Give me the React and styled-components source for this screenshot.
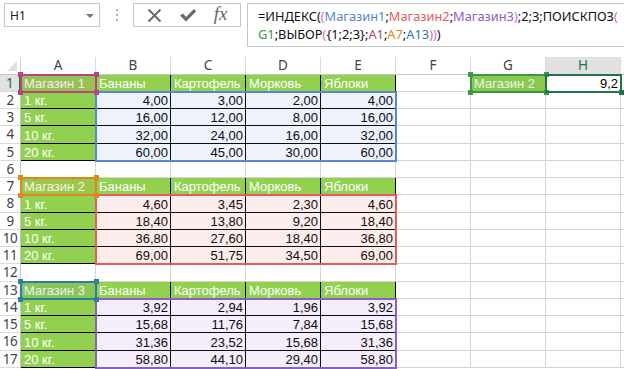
import React from "react";
import styled, { createGlobalStyle } from "styled-components";

const GlobalStyle = createGlobalStyle`
  html, body { margin: 0; padding: 0; background: #fff; }
  body { width: 624px; height: 369px; overflow: hidden; }
`;

const UI_FONT = `"Noto Sans", "Open Sans", "Liberation Sans", sans-serif`;
const CELL_FONT = `"Liberation Sans", Arial, sans-serif`;

const Page = styled.div`
  width: 624px;
  height: 369px;
  overflow: hidden;
  display: flex;
  flex-direction: column;
  background: #fff;
`;

const FormulaBar = styled.div`
  height: 57px;
  flex: none;
  display: flex;
  align-items: flex-start;
  padding: 3px 0 0 4px;
  box-sizing: border-box;
`;

const NameBox = styled.div`
  width: 96px;
  height: 24px;
  box-sizing: border-box;
  border: 1px solid #c6c6c6;
  display: flex;
  align-items: center;
  justify-content: space-between;
  padding: 0 5px 0 5px;
  font: 12px ${UI_FONT};
  color: #222;
`;

const Caret = styled.span`
  width: 0;
  height: 0;
  border-left: 4px solid transparent;
  border-right: 4px solid transparent;
  border-top: 4px solid #777;
  margin-top: 1px;
`;

const Grip = styled.div`
  width: 33px;
  height: 24px;
  display: flex;
  align-items: center;
  justify-content: center;
`;

const FxButtons = styled.div`
  width: 108px;
  height: 24px;
  box-sizing: border-box;
  border: 1px solid #c6c6c6;
  display: flex;
  align-items: center;
  justify-content: space-around;
  padding: 0 4px;
`;

const FxLabel = styled.span`
  font: italic 19px "Liberation Serif", "DejaVu Serif", serif;
  color: #666;
  line-height: 20px;
  margin-top: -2px;
`;

const FormulaInput = styled.div`
  flex: 1;
  margin-left: 6px;
  margin-right: -4px;
  height: 44px;
  box-sizing: border-box;
  border: 1px solid #c6c6c6;
  padding: 3px 0 0 10px;
  font: 12.8px ${UI_FONT};
  line-height: 18px;
  color: #111;
  white-space: pre;
  overflow: hidden;
`;

const Tok = styled.span`
  color: ${(p) => p.$c || "#111"};
`;

const Sheet = styled.div`
  display: grid;
  grid-template-columns: 21px repeat(8, 75px) 1fr;
  grid-template-rows: 17.5px repeat(17, 17.25px);
`;

const place = (p) => `grid-row: ${p.$r}; grid-column: ${p.$c};`;

const Corner = styled.div`
  grid-row: 1;
  grid-column: 1;
  box-sizing: border-box;
  border-right: 1px solid #d4d4d4;
  border-bottom: 1px solid #c6c6c6;
  position: relative;
  &::after {
    content: "";
    position: absolute;
    right: 3px;
    bottom: 3px;
    width: 0;
    height: 0;
    border-left: 10px solid transparent;
    border-bottom: 10px solid #dfdfdf;
  }
`;

const ColHead = styled.div`
  grid-row: 1;
  grid-column: ${(p) => p.$c};
  box-sizing: border-box;
  border-right: 1px solid #dadada;
  border-bottom: 1px solid ${(p) => (p.$sel ? "#217346" : "#c6c6c6")};
  background: ${(p) => (p.$sel ? "#e1e1e1" : "#fff")};
  color: ${(p) => (p.$sel ? "#217346" : "#444")};
  font: 13.5px ${UI_FONT};
  display: flex;
  align-items: center;
  justify-content: center;
  line-height: 16px;
`;

const RowHead = styled.div`
  grid-row: ${(p) => p.$r};
  grid-column: 1;
  box-sizing: border-box;
  border-right: ${(p) => (p.$sel ? "2px solid #217346" : "1px solid #c6c6c6")};
  border-bottom: 1px solid #dadada;
  background: ${(p) => (p.$sel ? "#e1e1e1" : "#fff")};
  color: ${(p) => (p.$sel ? "#217346" : "#444")};
  font: 13.5px ${UI_FONT};
  display: flex;
  align-items: center;
  justify-content: center;
  line-height: 16px;
  letter-spacing: -0.5px;
`;

const Cell = styled.div`
  ${place}
  box-sizing: border-box;
  min-width: 0;
  border-right: 1px solid ${(p) => (p.$table ? "#000" : "#d4d4d4")};
  border-bottom: 1px solid ${(p) => (p.$table ? "#000" : "#d4d4d4")};
  background: ${(p) => (p.$green ? "#92d050" : "#fff")};
  color: ${(p) => (p.$green ? "#fff" : "#000")};
  font: 13px ${CELL_FONT};
  line-height: 15px;
  display: flex;
  align-items: flex-end;
  justify-content: ${(p) => (p.$right ? "flex-end" : "flex-start")};
  padding: 0 2px 0 3px;
  white-space: nowrap;
  overflow: hidden;
`;

const RangeBox = styled.div`
  ${place}
  position: relative;
  margin: -1px;
  border: 2px solid ${(p) => p.$color};
  background: ${(p) => p.$tint || "transparent"};
  pointer-events: none;
`;

const Handle = styled.span`
  position: absolute;
  width: 5px;
  height: 5px;
  background: ${(p) => p.$color};
  ${(p) => (p.$top ? "top: -4px;" : "bottom: -4px;")}
  ${(p) => (p.$left ? "left: -4px;" : "right: -4px;")}
`;

const fmt = (n) => n.toFixed(2).replace(".", ",");

const blocks = [
  {
    title: "Магазин 1",
    data: [
      [4, 3, 2, 4],
      [16, 12, 8, 16],
      [32, 24, 16, 32],
      [60, 45, 30, 60],
    ],
  },
  {
    title: "Магазин 2",
    data: [
      [4.6, 3.45, 2.3, 4.6],
      [18.4, 13.8, 9.2, 18.4],
      [36.8, 27.6, 18.4, 36.8],
      [69, 51.75, 34.5, 69],
    ],
  },
  {
    title: "Магазин 3",
    data: [
      [3.92, 2.94, 1.96, 3.92],
      [15.68, 11.76, 7.84, 15.68],
      [31.36, 23.52, 15.68, 31.36],
      [58.8, 44.1, 29.4, 58.8],
    ],
  },
];

const heads = ["Бананы", "Картофель", "Морковь", "Яблоки"];
const weights = ["1 кг.", "5 кг.", "10 кг.", "20 кг."];
const COLS = ["A", "B", "C", "D", "E", "F", "G", "H", ""];

const blank = () => ({ text: "" });

function buildRows() {
  const rows = [];
  blocks.forEach((b, bi) => {
    rows.push([
      { text: b.title, green: true, table: true },
      ...heads.map((h) => ({ text: h, green: true, table: true })),
      blank(),
      bi === 0 ? { text: "Магазин 2", green: true } : blank(),
      bi === 0 ? { text: "9,2", right: true } : blank(),
      blank(),
    ]);
    b.data.forEach((vals, i) => {
      rows.push([
        { text: weights[i], green: true, table: true },
        ...vals.map((v) => ({ text: fmt(v), right: true, table: true })),
        blank(),
        blank(),
        blank(),
        blank(),
      ]);
    });
    if (bi < 2) rows.push(COLS.map(blank));
  });
  return rows;
}

const rows = buildRows();

const ranges = [
  { r: "3 / 7", c: "3 / 7", color: "#5b84d8", tint: "rgba(91,132,216,0.1)" },
  { r: "9 / 13", c: "3 / 7", color: "#e35d5d", tint: "rgba(227,93,93,0.11)" },
  { r: "15 / 19", c: "3 / 7", color: "#8c5dc3", tint: "rgba(140,93,195,0.1)" },
  { r: "2", c: "2", color: "#b8437f", tint: "rgba(184,67,127,0.1)", handles: true },
  { r: "8", c: "2", color: "#e0861f", tint: "rgba(224,134,31,0.1)", handles: true },
  { r: "14", c: "2", color: "#317d9f", tint: "rgba(49,125,159,0.1)", handles: true },
  { r: "2", c: "8", color: "#3b9946", tint: "rgba(59,153,70,0.1)", handles: true },
  { r: "2", c: "9", color: "#217346", active: true },
];

const L1 = [
  ["=ИНДЕКС(", "#111"],
  ["(", "#d070d0"],
  ["Магазин1", "#5b84d8"],
  [";", "#111"],
  ["Магазин2", "#e35d5d"],
  [";", "#111"],
  ["Магазин3", "#8c5dc3"],
  [")", "#d070d0"],
  [";2;3;ПОИСКПОЗ", "#111"],
  ["(", "#e0708f"],
];
const L2 = [
  ["G1", "#3b9946"],
  [";ВЫБОР", "#111"],
  ["(", "#e0708f"],
  ["{1;2;3};", "#111"],
  ["A1", "#b8437f"],
  [";", "#111"],
  ["A7", "#e0861f"],
  [";", "#111"],
  ["A13", "#317d9f"],
  [")", "#e0708f"],
  [")", "#d070d0"],
  [")", "#111"],
];

const CrossIcon = () => (
  <svg width="15" height="15" viewBox="0 0 15 15">
    <path d="M1.5 1.5 L13.5 13.5 M13.5 1.5 L1.5 13.5" stroke="#6a6a6a" strokeWidth="2" fill="none" />
  </svg>
);
const CheckIcon = () => (
  <svg width="18" height="15" viewBox="0 0 18 15">
    <path d="M1 7.5 L4 5.5 L7 9 L15 1 L17 3.5 L7 13.5 Z" fill="#6a6a6a" />
  </svg>
);
const GripIcon = () => (
  <svg width="4" height="14" viewBox="0 0 4 14">
    <circle cx="2" cy="2" r="1" fill="#9a9a9a" />
    <circle cx="2" cy="7" r="1" fill="#9a9a9a" />
    <circle cx="2" cy="12" r="1" fill="#9a9a9a" />
  </svg>
);

export default function App() {
  return (
    <Page>
      <GlobalStyle />
      <FormulaBar>
        <NameBox>
          <span>H1</span>
          <Caret />
        </NameBox>
        <Grip>
          <GripIcon />
        </Grip>
        <FxButtons>
          <CrossIcon />
          <CheckIcon />
          <FxLabel>fx</FxLabel>
        </FxButtons>
        <FormulaInput>
          {L1.map(([t, c], i) => (
            <Tok key={"a" + i} $c={c}>{t}</Tok>
          ))}
          {"\n"}
          {L2.map(([t, c], i) => (
            <Tok key={"b" + i} $c={c}>{t}</Tok>
          ))}
        </FormulaInput>
      </FormulaBar>
      <Sheet>
        <Corner />
        {COLS.map((c, i) => (
          <ColHead key={"h" + i} $c={i + 2} $sel={c === "H"}>{c}</ColHead>
        ))}
        {rows.map((row, ri) => (
          <React.Fragment key={"r" + ri}>
            <RowHead $r={ri + 2} $sel={ri === 0}>{ri + 1}</RowHead>
            {row.map((cell, ci) => (
              <Cell
                key={ci}
                $r={ri + 2}
                $c={ci + 2}
                $green={cell.green}
                $table={cell.table}
                $right={cell.right}
              >
                {cell.text}
              </Cell>
            ))}
          </React.Fragment>
        ))}
        {ranges.map((rg, i) => (
          <RangeBox key={"g" + i} $r={rg.r} $c={rg.c} $color={rg.color} $tint={rg.tint}>
            {rg.handles && (
              <>
                <Handle $color={rg.color} $top $left />
                <Handle $color={rg.color} $top />
                <Handle $color={rg.color} $left />
                <Handle $color={rg.color} />
              </>
            )}
            {rg.active && <Handle $color={rg.color} />}
          </RangeBox>
        ))}
      </Sheet>
    </Page>
  );
}
